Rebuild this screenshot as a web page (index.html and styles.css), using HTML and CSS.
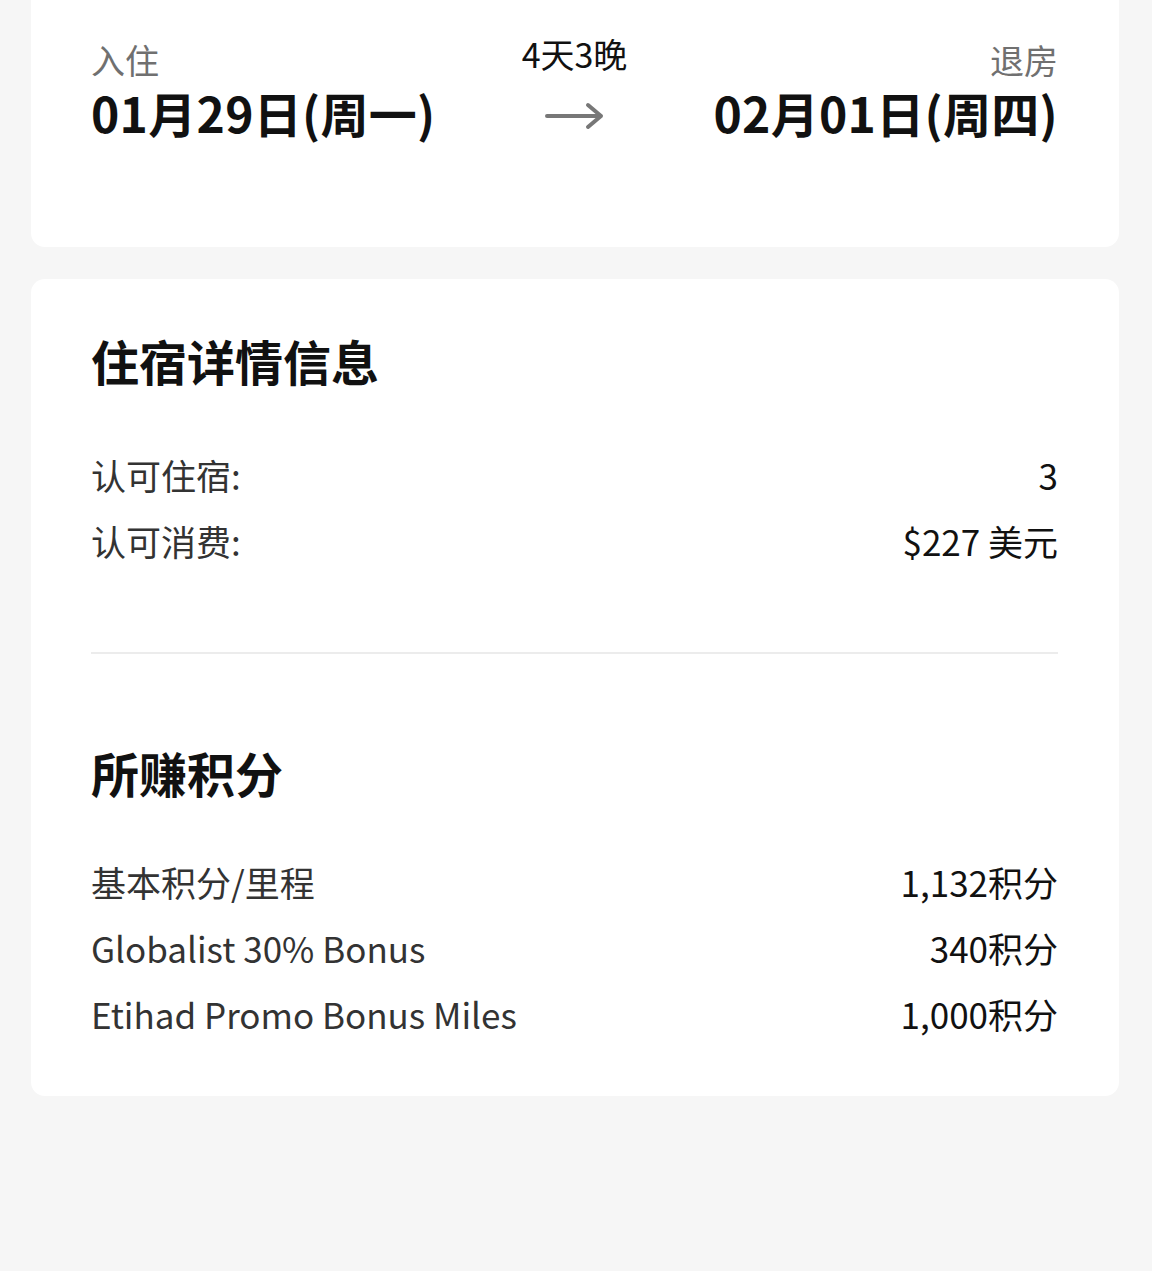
FILE: index.html
```html
<!DOCTYPE html>
<html lang="zh-CN">
<head>
  <meta charset="UTF-8">
  <meta name="viewport" content="width=device-width, initial-scale=1.0">
  <title>住宿详情</title>
  <link rel="stylesheet" href="styles.css">
</head>
<body>
  <div class="page">
    <!-- 入住 / 退房 -->
    <div class="card stay-card">
      <div class="stay-side">
        <div class="stay-label">入住</div>
        <div class="stay-date">01月29日(周一)</div>
      </div>
      <div class="stay-mid">
        <div class="stay-nights">4天3晚</div>
        <svg class="stay-arrow" width="60" height="30" viewBox="0 0 60 30">
          <path d="M2 15 H56 M43 4 L56 15 L43 26" fill="none" stroke="#777" stroke-width="4" stroke-linecap="round" stroke-linejoin="round"/>
        </svg>
      </div>
      <div class="stay-side right">
        <div class="stay-label">退房</div>
        <div class="stay-date">02月01日(周四)</div>
      </div>
    </div>

    <!-- 详情 -->
    <div class="card detail-card">
      <h2 class="section-title">住宿详情信息</h2>
      <div class="rows first">
        <div class="row"><span class="row-label">认可住宿:</span><span class="row-value">3</span></div>
        <div class="row"><span class="row-label">认可消费:</span><span class="row-value">$227 美元</span></div>
      </div>

      <div class="divider"></div>

      <h2 class="section-title">所赚积分</h2>
      <div class="rows second">
        <div class="row"><span class="row-label">基本积分/里程</span><span class="row-value">1,132积分</span></div>
        <div class="row"><span class="row-label">Globalist 30% Bonus</span><span class="row-value">340积分</span></div>
        <div class="row"><span class="row-label">Etihad Promo Bonus Miles</span><span class="row-value">1,000积分</span></div>
      </div>
    </div>
  </div>
</body>
</html>
```

FILE: styles.css
```css
body {
  margin: 0;
  background: #f6f6f6;
  font-family: "Noto Sans CJK SC", "Noto Sans", sans-serif;
  color: #111;
}

.page {
  padding: 0 33px 0 31px;
}

.card {
  background: #fff;
  border-radius: 14px;
}

/* top card: check-in / check-out */
.stay-card {
  border-radius: 0 0 14px 14px;
  height: 247px;
  box-sizing: border-box;
  padding: 36px 61px 0 60px;
  display: flex;
  justify-content: space-between;
  align-items: flex-start;
}

.stay-side {
  display: flex;
  flex-direction: column;
}

.stay-side.right {
  align-items: flex-end;
}

.stay-label {
  font-size: 34px;
  line-height: 48px;
  color: #707070;
}

.stay-date {
  font-size: 48px;
  line-height: 56px;
  font-weight: 700;
  letter-spacing: 0.3px;
}

.stay-mid {
  display: flex;
  flex-direction: column;
  align-items: center;
}

.stay-nights {
  font-size: 34px;
  line-height: 40px;
  margin-top: -2px;
}

.stay-arrow {
  margin-top: 27px;
}

/* details card */
.detail-card {
  margin-top: 32px;
  padding: 50px 61px 50px 60px;
}

.section-title {
  margin: 0;
  font-size: 48px;
  line-height: 62px;
  font-weight: 700;
}

.rows.first {
  margin-top: 50px;
}

.rows.second {
  margin-top: 45px;
}

.row {
  display: flex;
  justify-content: space-between;
  height: 66px;
  align-items: center;
  font-size: 35px;
}

.row-label {
  color: #333;
}

.row-value {
  color: #111;
}

.divider {
  height: 2px;
  background: #ececec;
  margin: 79px 0 87px;
}
```
